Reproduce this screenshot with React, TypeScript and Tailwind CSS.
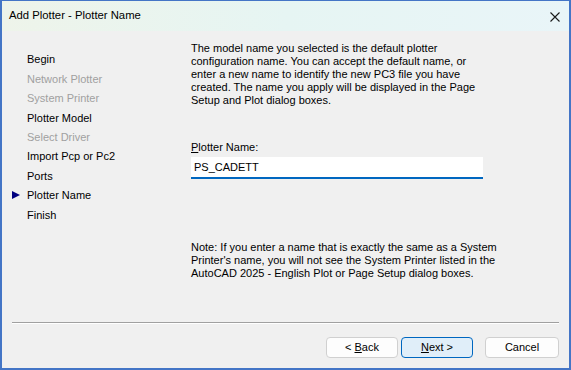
import React from 'react';

const steps = [
  { label: 'Begin', enabled: true },
  { label: 'Network Plotter', enabled: false },
  { label: 'System Printer', enabled: false },
  { label: 'Plotter Model', enabled: true },
  { label: 'Select Driver', enabled: false },
  { label: 'Import Pcp or Pc2', enabled: true },
  { label: 'Ports', enabled: true },
  { label: 'Plotter Name', enabled: true, current: true },
  { label: 'Finish', enabled: true },
];

const App: React.FC = () => {
  return (
    <div className="w-[571px] h-[370px] flex flex-col bg-[#f0f0f0] border-x-2 border-b-2 border-t border-[#4475c6] font-['Liberation_Sans',Arial,sans-serif] text-black overflow-hidden">
      {/* Title bar */}
      <div className="h-[30px] shrink-0 flex items-center justify-between pl-[7px] pr-[9px] bg-gradient-to-r from-[#eef4ea] via-[#e6f5f3] to-[#e9f5f8]">
        <span className="text-[11.3px] leading-none">Add Plotter - Plotter Name</span>
        <svg width="10" height="10" viewBox="0 0 10 10" className="mt-[1px]">
          <path d="M0.5 0.5 L9.5 9.5 M9.5 0.5 L0.5 9.5" stroke="#1a1a1a" strokeWidth="1.1" />
        </svg>
      </div>

      {/* Body */}
      <div className="h-[291px] shrink-0 flex text-[11px]">
        {/* Steps */}
        <div className="w-[189px] shrink-0 pt-[19px]">
          {steps.map((s) => (
            <div key={s.label} className="h-[19.4px] flex items-center">
              <div className="w-[25px] shrink-0 pl-[10px] flex items-center">
                {s.current && (
                  <svg width="8" height="8" viewBox="0 0 8 8">
                    <path d="M0 0 L8 4 L0 8 Z" fill="#000080" />
                  </svg>
                )}
              </div>
              <span className={s.enabled ? 'text-black' : 'text-[#a0a0a0]'}>{s.label}</span>
            </div>
          ))}
        </div>

        {/* Content */}
        <div className="flex-1 pt-[11px] leading-[13px]">
          <p className="whitespace-nowrap">
            The model name you selected is the default plotter<br />
            configuration name. You can accept the default name, or<br />
            enter a new name to identify the new PC3 file you have<br />
            created. The name you apply will be displayed in the Page<br />
            Setup and Plot dialog boxes.
          </p>
          <div className="mt-[34px]">
            <span><span className="underline">P</span>lotter Name:</span>
          </div>
          <div className="mt-[3px] w-[292px] h-[22px] bg-white border-b-2 border-[#0067c0] flex items-center pl-[3px]">
            <span>PS_CADETT</span>
          </div>
          <p className="mt-[62px] whitespace-nowrap">
            Note: If you enter a name that is exactly the same as a System<br />
            Printer's name, you will not see the System Printer listed in the<br />
            AutoCAD 2025 - English Plot or Page Setup dialog boxes.
          </p>
        </div>
      </div>

      {/* Separator */}
      <div className="mx-[10px] border-t border-[#a0a0a0] border-b border-b-white" />

      {/* Buttons */}
      <div className="flex justify-end pr-[10px] mt-[13px] text-[11px]">
        <button className="w-[72px] h-[21px] bg-[#fdfdfd] border border-[#d0d0d0] rounded-[4px]">
          &lt; <span className="underline">B</span>ack
        </button>
        <button className="ml-[3px] w-[72px] h-[21px] bg-[#e0eef9] border border-[#0067c0] rounded-[4px]">
          <span className="underline">N</span>ext &gt;
        </button>
        <button className="ml-[12px] w-[74px] h-[21px] bg-[#fdfdfd] border border-[#d0d0d0] rounded-[4px]">
          Cancel
        </button>
      </div>
    </div>
  );
};

export default App;
